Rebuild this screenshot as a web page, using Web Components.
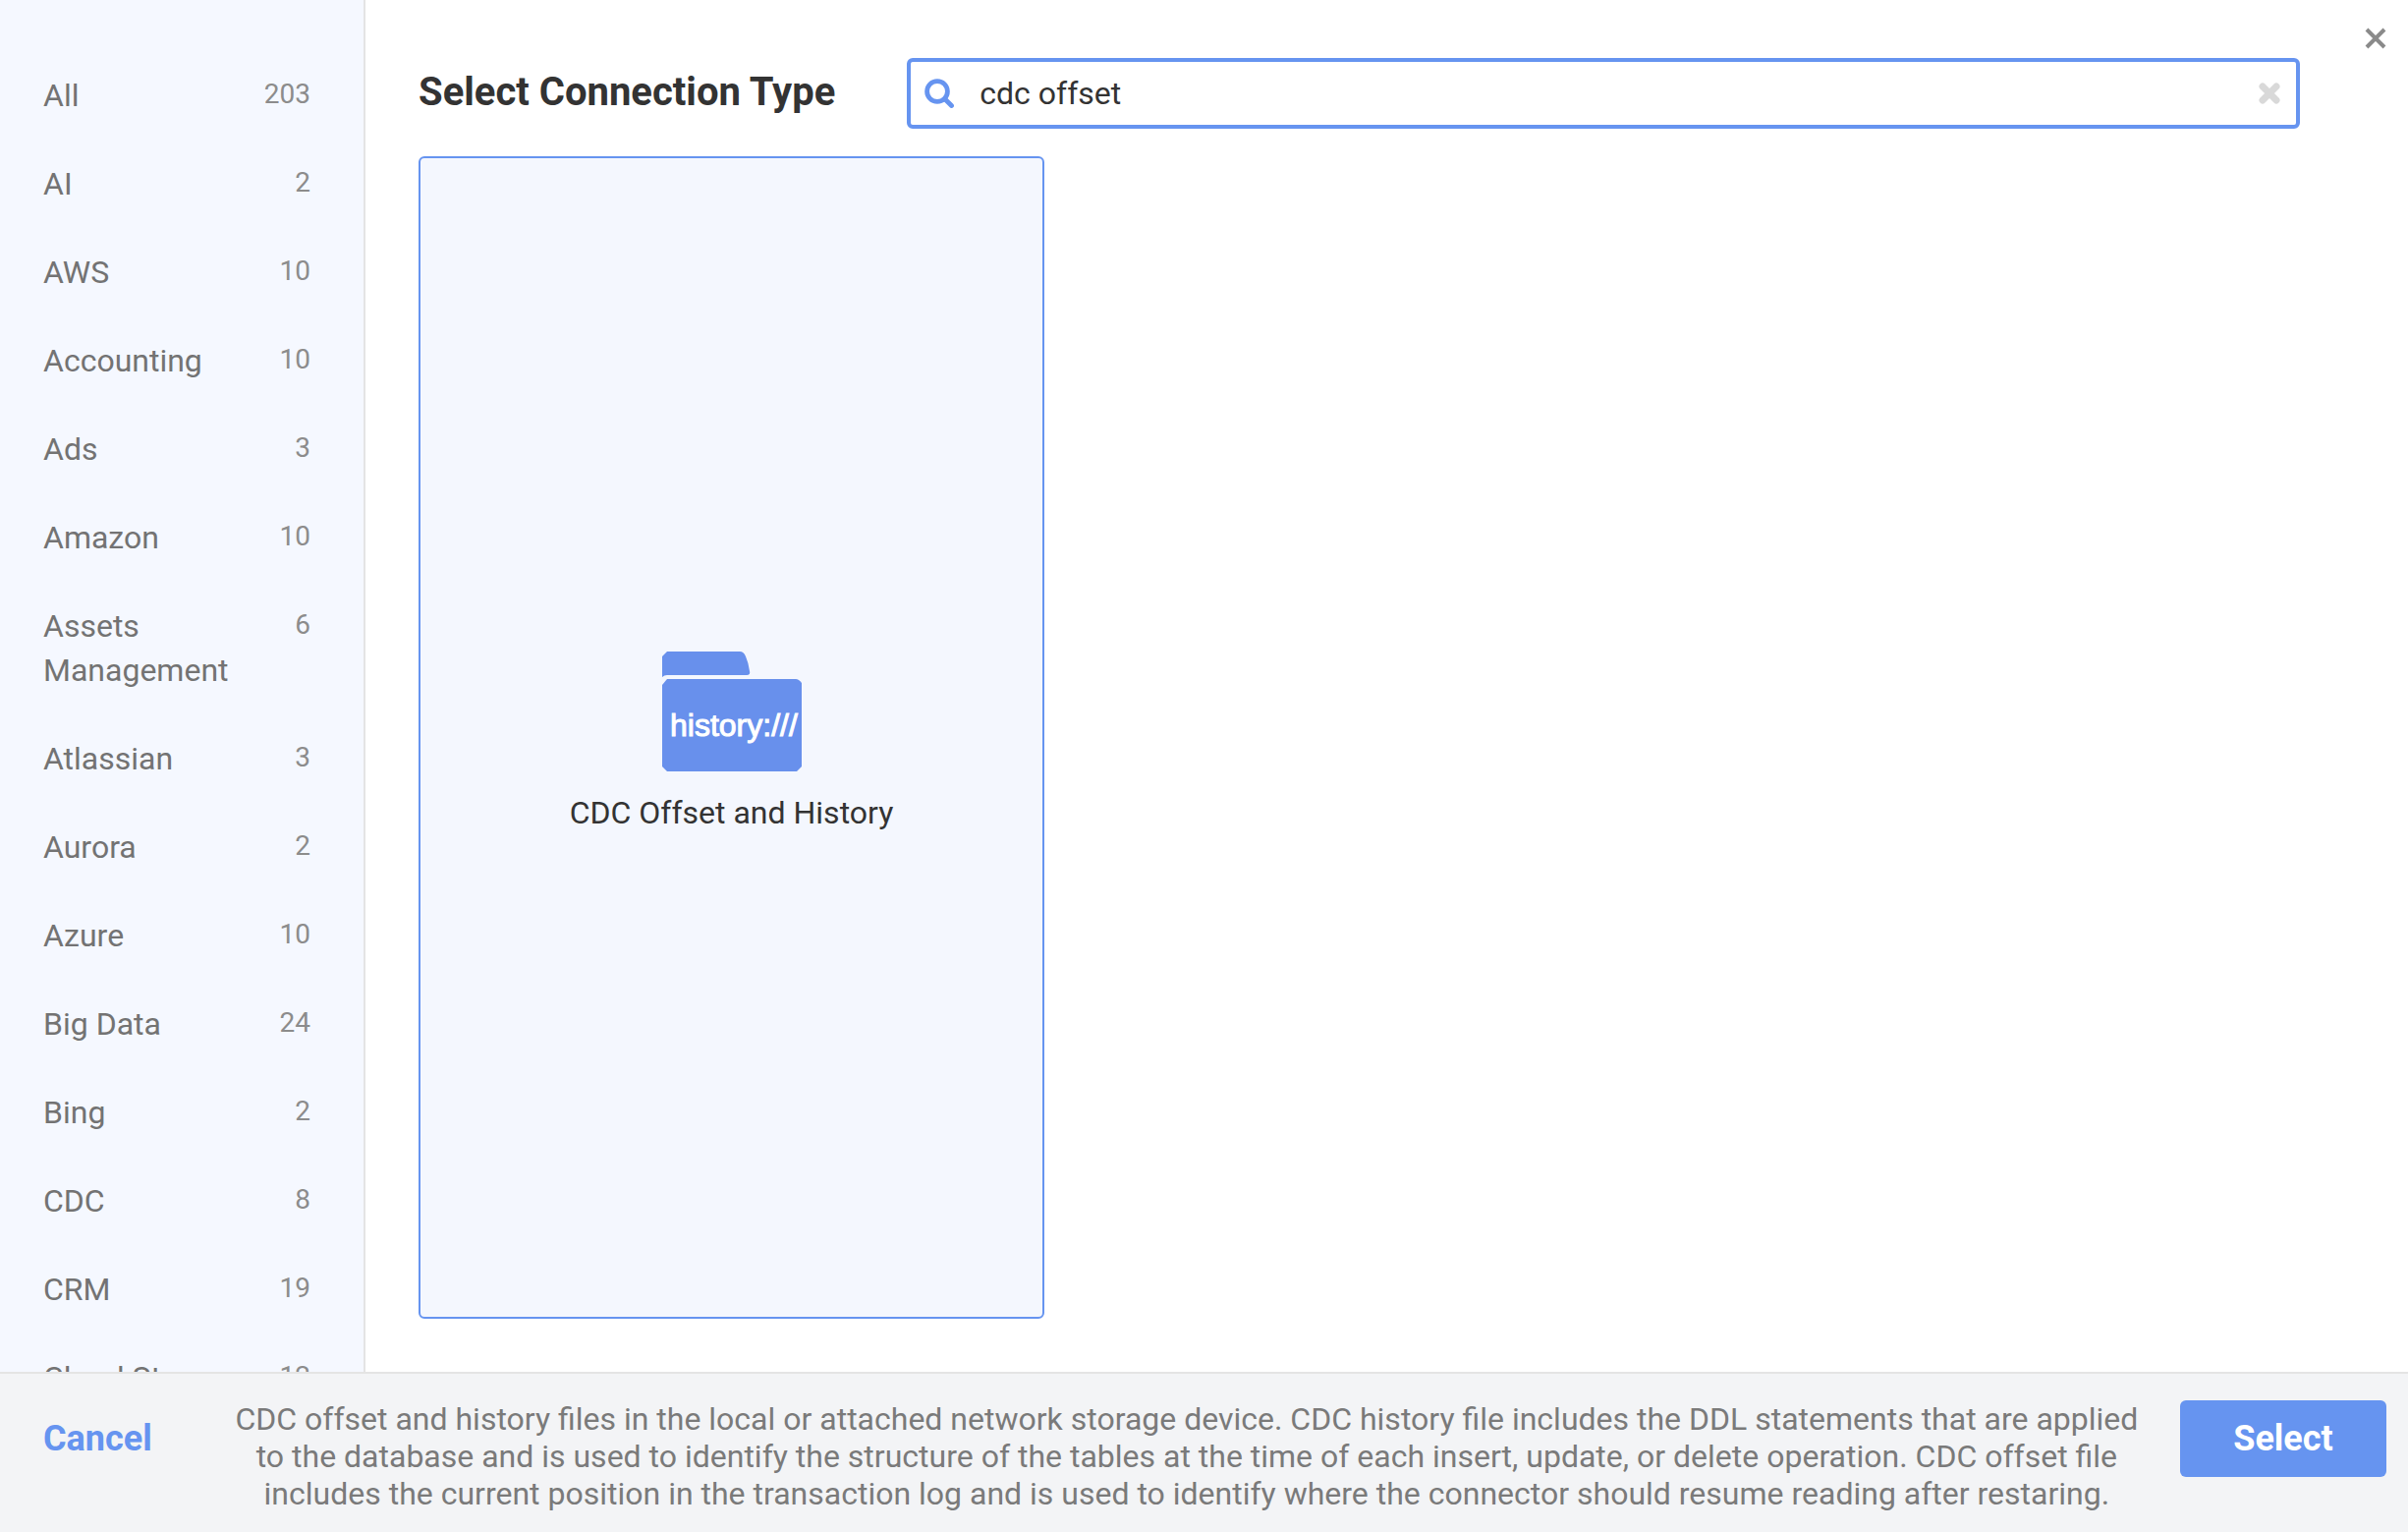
<!DOCTYPE html>
<html lang="en">
<head>
<meta charset="utf-8">
<title>Select Connection Type</title>
<style>
  html, body {
    height: 100%;
    margin: 0;
  }

  body {
    font-family: Roboto, "Liberation Sans", sans-serif;
    font-size: 32px;
    color: #333;
    background: #fff;
  }
</style>
</head>
<body>

<connection-dialog>
  <category-list slot="sidebar">
    <category-item count="203">All</category-item>
    <category-item count="2">AI</category-item>
    <category-item count="10">AWS</category-item>
    <category-item count="10">Accounting</category-item>
    <category-item count="3">Ads</category-item>
    <category-item count="10">Amazon</category-item>
    <category-item count="6">Assets Management</category-item>
    <category-item count="3">Atlassian</category-item>
    <category-item count="2">Aurora</category-item>
    <category-item count="10">Azure</category-item>
    <category-item count="24">Big Data</category-item>
    <category-item count="2">Bing</category-item>
    <category-item count="8">CDC</category-item>
    <category-item count="19">CRM</category-item>
    <category-item count="12">Cloud Storage</category-item>
  </category-list>

  <span slot="title">Select Connection Type</span>
  <search-box slot="search" value="cdc offset"></search-box>

  <connection-card>CDC Offset and History</connection-card>

  <dialog-footer slot="footer">CDC offset and history files in the local or attached network storage device. CDC history file includes the DDL statements that are applied to the database and is used to identify the structure of the tables at the time of each insert, update, or delete operation. CDC offset file includes the current position in the transaction log and is used to identify where the connector should resume reading after restaring.</dialog-footer>
</connection-dialog>

<template id="connection-dialog">
  <style>
    :host {
      display: grid;
      grid-template: minmax(0, 1fr) auto / 372px minmax(0, 1fr);
      position: relative;
      height: 100vh;
      overflow: hidden;
    }

    main {
      display: flex;
      flex-direction: column;
      gap: 28px;
      box-sizing: border-box;
      padding: 59px 110px 54px 54px;
    }

    header {
      display: flex;
      align-items: flex-start;
      gap: 73px;
    }

    h1 {
      margin: 0;
      font-size: 40px;
      font-weight: 700;
      line-height: 70px;
      white-space: nowrap;
    }

    ::slotted(search-box) {
      flex: 1;
    }

    .cards {
      display: grid;
      flex: 1;
      grid-template-columns: repeat(3, 1fr);
      gap: 2px;
    }

    ::slotted(dialog-footer) {
      grid-column: 1 / -1;
    }

    .close {
      position: absolute;
      top: 22px;
      right: 16px;
      padding: 6px;
      border: 0;
      background: none;
      cursor: pointer;
    }

    .close svg {
      display: block;
    }
  </style>

  <slot name="sidebar"></slot>
  <main>
    <header>
      <h1><slot name="title"></slot></h1>
      <slot name="search"></slot>
    </header>
    <div class="cards"><slot></slot></div>
  </main>
  <slot name="footer"></slot>
  <button class="close" type="button" aria-label="Close">
    <svg width="22" height="22" viewBox="0 0 22 22" stroke="#8a8a8a" stroke-width="4">
      <path d="M2 2L20 20M20 2L2 20"/>
    </svg>
  </button>
</template>

<template id="category-list">
  <style>
    :host {
      display: block;
      min-height: 0;
      overflow: hidden;
      border-right: 2px solid #e4e4e4;
      background: #f5f8ff;
    }

    nav {
      display: flex;
      flex-direction: column;
      gap: 45px;
      padding: 75px 54px 45px 44px;
    }
  </style>

  <nav aria-label="Categories"><slot></slot></nav>
</template>

<template id="category-item">
  <style>
    :host {
      display: block;
    }

    a {
      display: flex;
      align-items: flex-start;
      justify-content: space-between;
      gap: 24px;
      color: #737373;
      line-height: 45px;
      text-decoration: none;
    }

    .count {
      color: #8c8c8c;
      font-size: 28px;
      line-height: 42px;
    }
  </style>

  <a href="#"><span><slot></slot></span><span class="count"></span></a>
</template>

<template id="search-box">
  <style>
    :host {
      display: block;
    }

    label {
      display: flex;
      align-items: center;
      box-sizing: border-box;
      height: 72px;
      padding: 0 14px;
      border: 4px solid #6694f0;
      border-radius: 6px;
      background: #fff;
    }

    svg {
      display: block;
      flex: none;
    }

    input {
      flex: 1;
      min-width: 0;
      padding: 0 26px;
      border: 0;
      outline: 0;
      background: none;
      color: #333;
      font: inherit;
    }

    button {
      padding: 0 2px;
      border: 0;
      background: none;
      cursor: pointer;
    }
  </style>

  <label>
    <svg width="30" height="30" viewBox="0 0 30 30" fill="none" stroke="#6694f0">
      <circle cx="13" cy="13" r="10.4" stroke-width="4.8"/>
      <path d="M20.5 20.5L27.5 27.5" stroke-width="4.8" stroke-linecap="round"/>
    </svg>
    <input type="text" aria-label="Search connection types">
    <button type="button" aria-label="Clear search">
      <svg width="22" height="22" viewBox="0 0 22 22" stroke="#d9d9d9" stroke-width="7" stroke-linecap="round">
        <path d="M4 4L18 18M18 4L4 18"/>
      </svg>
    </button>
  </label>
</template>

<template id="connection-card">
  <style>
    :host {
      display: flex;
    }

    button {
      display: flex;
      flex: 1;
      flex-direction: column;
      align-items: center;
      justify-content: center;
      gap: 20px;
      padding: 12px 20px 0;
      border: 2px solid #6694f0;
      border-radius: 6px;
      background: #f4f7fe;
      color: #333;
      font: inherit;
      line-height: 45px;
      cursor: pointer;
    }

    svg {
      display: block;
    }

    text {
      font: 32px "Liberation Sans", Arial, sans-serif;
    }
  </style>

  <button type="button">
    <svg width="142" height="122" viewBox="0 0 142 122" fill="#6890ec" aria-hidden="true">
      <path d="M0 26V5L5 0H79Q83 0 85 5Q88 12 89 20Q90 24 86 24H5Q2 24 0 26Z"/>
      <path d="M0 34L5 28H136Q139 28 142 32V117L137 122H5L0 117Z"/>
      <text x="8" y="86" fill="#fff" stroke="#fff">history:///</text>
    </svg>
    <span><slot></slot></span>
  </button>
</template>

<template id="dialog-footer">
  <style>
    :host {
      display: flex;
      align-items: flex-start;
      padding: 27px 22px 20px 44px;
      border-top: 2px solid #e4e4e4;
      background: #f3f4f6;
    }

    button {
      flex: none;
      height: 78px;
      padding: 0;
      border: 0;
      border-radius: 6px;
      background: none;
      color: #6694f0;
      font: inherit;
      font-size: 36px;
      font-weight: 700;
      cursor: pointer;
    }

    .select {
      width: 210px;
      background: #6694f0;
      color: #fff;
    }

    p {
      flex: 1;
      margin: 0;
      padding: 0 40px 0 82px;
      color: #7a7a7a;
      line-height: 38px;
      text-align: center;
    }
  </style>

  <button type="button">Cancel</button>
  <p><slot></slot></p>
  <button class="select" type="button">Select</button>
</template>

<script>
class TemplateElement extends HTMLElement {
  constructor() {
    super();
    const template = document.getElementById(this.localName);
    this.attachShadow({ mode: "open" });
    this.shadowRoot.appendChild(template.content.cloneNode(true));
  }
}

class ConnectionDialog extends TemplateElement {}

class CategoryList extends TemplateElement {}

class CategoryItem extends TemplateElement {
  connectedCallback() {
    this.shadowRoot.querySelector(".count").textContent = this.getAttribute("count");
  }
}

class SearchBox extends TemplateElement {
  connectedCallback() {
    const input = this.shadowRoot.querySelector("input");
    input.value = this.getAttribute("value") || "";
    this.shadowRoot.querySelector("button").addEventListener("click", () => {
      input.value = "";
      input.focus();
    });
  }
}

class ConnectionCard extends TemplateElement {}

class DialogFooter extends TemplateElement {}

customElements.define("connection-dialog", ConnectionDialog);
customElements.define("category-list", CategoryList);
customElements.define("category-item", CategoryItem);
customElements.define("search-box", SearchBox);
customElements.define("connection-card", ConnectionCard);
customElements.define("dialog-footer", DialogFooter);
</script>
</body>
</html>
